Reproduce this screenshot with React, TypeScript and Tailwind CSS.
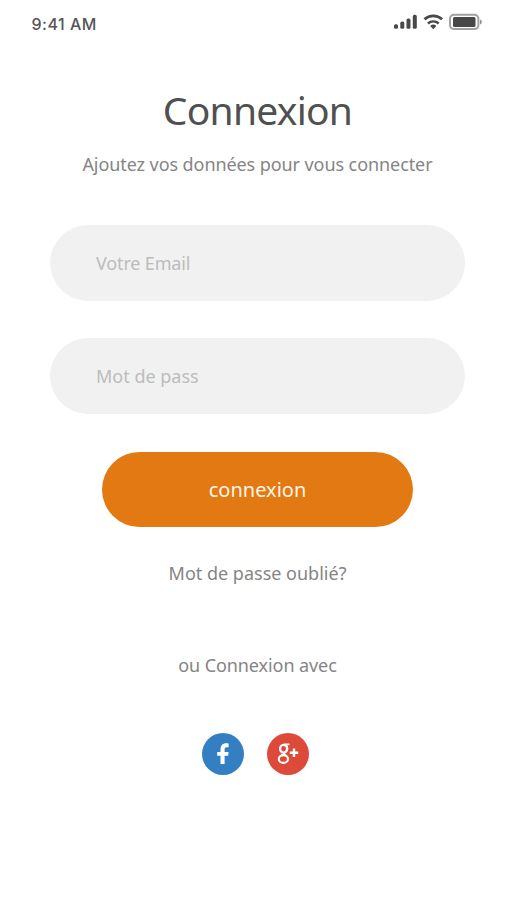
import React from "react";

function StatusBar() {
  return (
    <header className="flex h-[46px] w-[507px] items-start justify-between pl-[31.5px] pr-[24px] pt-[13px]">
      <span className="pt-px font-['Inter',sans-serif] text-[16px] font-medium leading-[21px] tracking-[0.5px] text-[#555555]">
        9:41 AM
      </span>
      <svg width="90" height="18" viewBox="0 0 90 18" className="text-[#484848]" aria-hidden="true">
        <g fill="currentColor">
          <rect x="1" y="11.2" width="4" height="4.6" rx="1.6" />
          <rect x="7.3" y="8.6" width="4" height="7.2" rx="1.6" />
          <rect x="13.5" y="5.4" width="4" height="10.4" rx="1.6" />
          <rect x="19.8" y="1.8" width="4" height="14" rx="1.6" />
          <path d="M40.3 16.2 37.2 12.9a4.6 4.6 0 0 1 6.2 0Z" />
        </g>
        <g fill="none" stroke="currentColor">
          <path d="M31.5 6.3a13 13 0 0 1 17.6 0" strokeWidth="2.9" />
          <path d="M34.9 10.5a8 8 0 0 1 10.8 0" strokeWidth="2.4" />
        </g>
        <rect x="57" y="1.7" width="28.4" height="14.4" rx="4" fill="none" stroke="#a2a2a2" strokeWidth="2" />
        <rect x="60" y="4" width="22.5" height="10" rx="1.5" fill="currentColor" />
        <path d="M87.2 6.4c2 .8 2 4.2 0 5Z" fill="#777777" />
      </svg>
    </header>
  );
}

export default function App() {
  return (
    <div className="min-h-[900px] w-full overflow-hidden bg-white font-['Noto_Sans',sans-serif]">
      <StatusBar />
      <main className="ml-[50px] flex w-[415px] flex-col items-center">
        <h1 className="mt-[37px] whitespace-nowrap text-[39px] font-normal leading-[54px] tracking-[-0.75px] text-[#505050]">
          Connexion
        </h1>
        <p className="mt-[14px] whitespace-nowrap text-[18px] leading-[26px] tracking-[-0.08px] text-[#858585]">
          Ajoutez vos données pour vous connecter
        </p>
        <form className="mt-[47.5px] flex w-full flex-col items-center" onSubmit={(e) => e.preventDefault()}>
          <input
            type="email"
            aria-label="Votre Email"
            placeholder="Votre Email"
            className="h-[76px] w-full rounded-full bg-[#f1f1f1] px-[46px] text-[18px] tracking-[-0.15px] outline-none placeholder:text-[#bcbcbc]"
          />
          <input
            type="password"
            aria-label="Mot de pass"
            placeholder="Mot de pass"
            className="mt-[37px] h-[76px] w-full rounded-full bg-[#f1f1f1] px-[46px] text-[18px] outline-none placeholder:text-[#bcbcbc]"
          />
          <button className="mt-[38px] h-[75px] w-[311px] rounded-full bg-[#e27912] pt-px text-[20px] text-[#fff5e8]">
            connexion
          </button>
        </form>
        <a className="mt-[33px] whitespace-nowrap text-[18px] leading-[26px] text-[#858585]">Mot de passe oublié?</a>
        <p className="mt-[66px] whitespace-nowrap text-[18px] leading-[26px] tracking-[-0.08px] text-[#858585]">ou Connexion avec</p>
        <div className="mr-[4px] mt-[55px] flex gap-[23px]">
          <button aria-label="Facebook" className="size-[42px] rounded-full bg-[#347fc1]">
            <svg viewBox="0 0 42 42" className="size-full" fill="white">
              <path d="M18.5 31V22.8h-3.3v-3.7h3.3v-2.7c0-3.9 2.1-6.1 5.6-6.1 1.1 0 2 .1 2.5.2v3.8h-1.8c-1.8 0-2.2.9-2.2 2.2v2.6h4l-.5 3.7h-3.5V31Z" />
            </svg>
          </button>
          <button aria-label="Google+" className="size-[42px] rounded-full bg-[#de4a3a]">
            <svg viewBox="0 0 42 42" className="size-full" fill="none" stroke="white">
              <ellipse cx="16.6" cy="15.8" rx="3.5" ry="3.9" strokeWidth="2.3" />
              <path d="M16.8 11.4h5.6M18.8 11.8c2.4 2.4 2.2 5.2-.3 6.9-2.4 1.4-2.2 2.2.4 3.6" strokeWidth="1.8" />
              <ellipse cx="16.4" cy="26" rx="4.6" ry="3.9" strokeWidth="2.1" />
              <path d="M27 15.6v8.4M22.8 19.8h8.4" strokeWidth="2.4" />
            </svg>
          </button>
        </div>
      </main>
    </div>
  );
}
